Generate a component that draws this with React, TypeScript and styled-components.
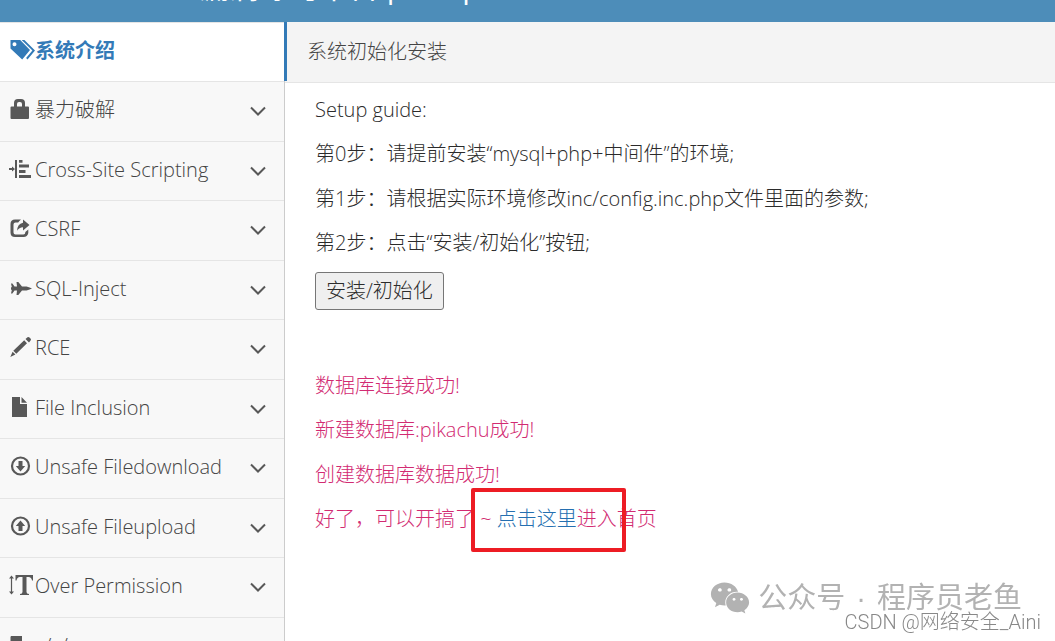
import React from 'react';
import styled, { createGlobalStyle } from 'styled-components';
import { FaWeixin, FaLeaf } from 'react-icons/fa';

const GlobalStyle = createGlobalStyle`
  * { box-sizing: border-box; }
  body {
    margin: 0;
    background: #fff;
    color: #2b2b2b;
    font-family: 'Open Sans', 'Noto Sans CJK SC', sans-serif;
    font-size: 20px;
    font-weight: 300;
    line-height: 30px;
  }
`;

const Page = styled.div`
  display: flex;
  flex-direction: column;
  height: 100vh;
  overflow: hidden;
`;

const TopBar = styled.header`
  flex: none;
  display: flex;
  align-items: flex-end;
  height: 22px;
  padding: 0 0 15px 48px;
  background: #4d8db9;
  overflow: hidden;
`;

const Brand = styled.a`
  display: flex;
  align-items: center;
  gap: 8px;
  color: #fff;
  font-size: 30px;
  font-weight: 400;
  line-height: 40px;
  white-space: nowrap;
  text-decoration: none;
`;

const Body = styled.div`
  flex: 1;
  display: flex;
  min-height: 0;
`;

const Sidebar = styled.nav`
  flex: none;
  width: 285px;
  border-right: 1px solid #ccc;
  background: #f8f8f8;
`;

const Menu = styled.ul`
  margin: 0;
  padding: 0;
  list-style: none;
`;

const MenuItem = styled.li<{ $active?: boolean }>`
  position: relative;
  height: 59px;
  border-top: 1px solid #e5e5e5;
  background: ${(p) => (p.$active ? '#fff' : '#f8f8f8')};

  &:nth-child(even) {
    height: 60px;
  }

  ${(p) =>
    p.$active &&
    `&::after {
      content: '';
      position: absolute;
      top: -1px;
      right: -3px;
      bottom: 0;
      width: 3px;
      background: #337ab7;
    }`}
`;

const MenuLink = styled.a<{ $active?: boolean }>`
  display: flex;
  align-items: center;
  height: 100%;
  padding: 0 18px 3px 9px;
  color: ${(p) => (p.$active ? '#337ab7' : '#444')};
  font-weight: ${(p) => (p.$active ? 700 : 300)};
  text-decoration: none;
  white-space: nowrap;
`;

const IconSlot = styled.span<{ $active?: boolean }>`
  display: flex;
  flex: none;
  width: 26px;
  padding-bottom: 2px;
  color: ${(p) => (p.$active ? '#337ab7' : '#585858')};
  svg {
    flex: none;
  }
`;

const Label = styled.span`
  flex: 1;
`;

const Chevron = styled.svg`
  flex: none;
  margin-top: 2px;
  color: #585858;
`;

const Main = styled.main`
  flex: 1;
  min-width: 0;
`;

const Breadcrumb = styled.div`
  height: 61px;
  padding: 15px 22px;
  border-bottom: 1px solid #e5e5e5;
  background: #f4f4f4;
  color: #444;
`;

const Content = styled.div`
  padding: 12px 30px;
`;

const Line = styled.p`
  margin: 0 0 14px;

  &:nth-child(even) {
    margin-bottom: 15px;
  }
`;

const Steps = styled.div`
  margin-bottom: -1px;
`;

const InstallButton = styled.button`
  display: block;
  height: 38px;
  padding: 0 10px;
  border: 1px solid #767676;
  border-radius: 3px;
  background: #efefef;
  color: #2b2b2b;
  font: inherit;
`;

const Messages = styled.div`
  margin-top: 61px;
  color: #d22b72;
`;

const HomeLink = styled.a`
  color: #256fb0;
  text-decoration: none;
`;

const LastLine = styled(Line)`
  position: relative;
`;

const Highlight = styled.span`
  position: absolute;
  top: -16px;
  left: 156px;
  width: 155px;
  height: 64px;
  border: 4px solid #ed1c24;
  border-radius: 2px;
`;

const Watermark = styled.div`
  position: fixed;
  right: 33px;
  bottom: 23px;
  display: flex;
  align-items: center;
  gap: 8px;
  color: #b2b2b2;
  font-family: 'Liberation Sans', 'Noto Sans CJK SC', sans-serif;
  font-size: 29px;
  font-weight: 400;
  line-height: 36px;
  white-space: nowrap;
`;

const WatermarkText = styled.span`
  display: flex;
  gap: 11px;
`;

const Credit = styled.div`
  position: fixed;
  right: 14px;
  bottom: 6px;
  color: #888;
  font-family: Roboto, 'Noto Sans CJK SC', sans-serif;
  font-size: 20px;
  font-weight: 300;
  line-height: 26px;
  white-space: nowrap;
`;

function Icon({ children }: { children: React.ReactNode }) {
  return (
    <svg width="26" height="22" viewBox="0 0 26 22" fill="currentColor" aria-hidden="true">
      {children}
    </svg>
  );
}

const TagsIcon = (
  <Icon>
    <path fillRule="evenodd" d="M1.500 1h9.700L21 11l-7.800 9.600L1.500 9.500zM5.500 3.200a2 2 0 1 0 0 4 2 2 0 0 0 0-4z" />
    <path d="M12.700 1h2.700L26 11.500l-7.500 9-1.400-1.400 6.300-7.600z" />
  </Icon>
);
const LockIcon = (
  <Icon>
    <path fillRule="evenodd" d="M1.500 9.500q0-1 1-1H5V5q0-4 4-4h3q4 0 4 4v3.500h3q1 0 1 1V20q0 1-1 1H2.500q-1 0-1-1zM8 8.500h5V6q0-2-2-2h-1q-2 0-2 2z" />
  </Icon>
);
const IndentIcon = (
  <Icon>
    <path d="M6 2H8v18H6zM10 2h3.500v2.700H10zM10 6.500h10v3H10zM10 12h6.500v3H10zM10 17h12v3H10zM0 10h3V8.500L6 11l-3 2.500v-1.500H0z" />
  </Icon>
);
const ShareIcon = (
  <Icon>
    <path d="M12 2.500H6q-4.500 0-4.500 4.500v8.500q0 4.500 4.500 4.500h8.500q4 0 4.800-4v-3.500l-3 2.500v.5q0 2-2 2H6.500q-2 0-2-2v-8q0-2 2-2h2.700q1-1.700 2.800-3z" />
    <path d="M14 2.500 20.500 8 14 13.500v-3.300q-4 0-5.800 3.600Q8.300 6.800 14 5.800z" />
  </Icon>
);
const PlaneIcon = (
  <Icon>
    <path d="M2 6.500h1.400l2.100 3H8L7.500 5h1.800L13 9.500h4.500q3.500 1 5.500 2-2 1-5.500 2H13l-3.700 4.500H7.500L8 13.500H5.500l-2.100 3H2l.800-3.500L2 12.500v-2l.8-.5z" />
  </Icon>
);
const PencilIcon = (
  <Icon>
    <path d="M15.200 4.300 18 7.200 7.300 17.800l-3-3zM16.500 3l2-1.700q1-.8 2 .2l1 1q1 1 .100 2L20 6.500zM3.600 15.800l2.800 2.800L1.300 21z" />
  </Icon>
);
const FileIcon = (
  <Icon>
    <path d="M3 1h8v7h7v13H3zM12.500 1 18 6.700h-5.500z" />
  </Icon>
);
const DownloadIcon = (
  <Icon>
    <circle cx="11.500" cy="11" r="8.500" fill="none" stroke="currentColor" strokeWidth="2.200" />
    <path d="M9.500 6h4v5h2.700l-4.700 5.500L6.800 11h2.700z" />
  </Icon>
);
const UploadIcon = (
  <Icon>
    <circle cx="11.500" cy="11" r="8.500" fill="none" stroke="currentColor" strokeWidth="2.200" />
    <path d="M9.500 16h4v-5h2.700l-4.700-5.500L6.800 11h2.700z" />
  </Icon>
);
const HeightIcon = (
  <Icon>
    <path d="M2.500 1.500 5 4.500H3.100v13H5l-2.500 3-2.500-3h1.900v-13H0z" />
    <path d="M6.500 1H24v5.500h-1Q22.500 3 19.500 3h-2v15q0 2 2.500 2v1h-9v-1q2.500 0 2.500-2V3h-2.500q-3 0-3.500 3.500h-1z" />
  </Icon>
);
const FolderIcon = (
  <Icon>
    <path d="M2 2h11v5h8v4H6L3 20H1.500V3z" />
  </Icon>
);

const items: { label: string; icon: React.ReactNode; active?: boolean }[] = [
  { label: '系统介绍', icon: TagsIcon, active: true },
  { label: '暴力破解', icon: LockIcon },
  { label: 'Cross-Site Scripting', icon: IndentIcon },
  { label: 'CSRF', icon: ShareIcon },
  { label: 'SQL-Inject', icon: PlaneIcon },
  { label: 'RCE', icon: PencilIcon },
  { label: 'File Inclusion', icon: FileIcon },
  { label: 'Unsafe Filedownload', icon: DownloadIcon },
  { label: 'Unsafe Fileupload', icon: UploadIcon },
  { label: 'Over Permission', icon: HeightIcon },
  { label: '../../', icon: FolderIcon },
];

export default function App() {
  return (
    <Page>
      <GlobalStyle />
      <TopBar>
        <Brand href="#">
          <FaLeaf size={26} />
          Pikachu 漏洞练习平台 pika~pika~
        </Brand>
      </TopBar>
      <Body>
        <Sidebar>
          <Menu>
            {items.map((item) => (
              <MenuItem key={item.label} $active={item.active}>
                <MenuLink href="#" $active={item.active}>
                  <IconSlot $active={item.active}>{item.icon}</IconSlot>
                  <Label>{item.label}</Label>
                  {!item.active && (
                    <Chevron width="16" height="10" viewBox="0 0 16 10" fill="none" stroke="currentColor" strokeWidth="2">
                      <path d="M1 1.500 8 8.500l7-7" />
                    </Chevron>
                  )}
                </MenuLink>
              </MenuItem>
            ))}
          </Menu>
        </Sidebar>
        <Main>
          <Breadcrumb>系统初始化安装</Breadcrumb>
          <Content>
            <Steps>
              <Line>Setup guide:</Line>
              <Line>第0步：请提前安装“mysql+php+中间件”的环境;</Line>
              <Line>第1步：请根据实际环境修改inc/config.inc.php文件里面的参数;</Line>
              <Line>第2步：点击“安装/初始化”按钮;</Line>
            </Steps>
            <InstallButton type="button">安装/初始化</InstallButton>
            <Messages>
              <Line>数据库连接成功!</Line>
              <Line>新建数据库:pikachu成功!</Line>
              <Line>创建数据库数据成功!</Line>
              <LastLine>
                好了，可以开搞了 ~ <HomeLink href="#">点击这里</HomeLink>进入首页
                <Highlight />
              </LastLine>
            </Messages>
          </Content>
        </Main>
      </Body>
      <Watermark>
        <FaWeixin size={40} />
        <WatermarkText>
          <span>公众号</span>
          <span>·</span>
          <span>程序员老鱼</span>
        </WatermarkText>
      </Watermark>
      <Credit>CSDN @网络安全_Aini</Credit>
    </Page>
  );
}
